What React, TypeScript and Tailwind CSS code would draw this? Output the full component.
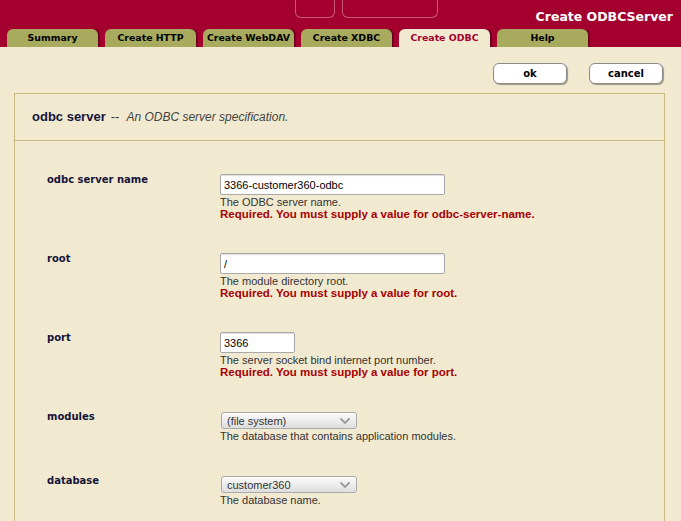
import React from "react";

const tabs = ["Summary", "Create HTTP", "Create WebDAV", "Create XDBC", "Create ODBC", "Help"];

const Chevron = () => (
  <svg width="12" height="8" viewBox="0 0 12 8" className="mr-[5px]">
    <path d="M1.5 1.5 L6 6 L10.5 1.5" fill="none" stroke="#9a9a9a" strokeWidth="1.8" />
  </svg>
);

const Row = ({
  label,
  children,
  help,
  error,
}: {
  label: string;
  children: React.ReactNode;
  help: string;
  error?: string;
}) => (
  <div className="flex pb-[33px]">
    <div className="w-[205px] pl-[32px] font-['DejaVu_Sans',sans-serif] font-bold text-[10px] leading-[12px] text-[#14143c]">
      {label}
    </div>
    <div className="flex flex-col font-['Liberation_Sans',Arial,sans-serif] text-[11px] leading-[12px]">
      {children}
      <div className="mt-[1px] text-[#333]">{help}</div>
      {error && <div className="font-bold text-[11.5px] text-[#a80000]">{error}</div>}
    </div>
  </div>
);

const TextBox = ({ value, width }: { value: string; width: string }) => (
  <div
    className={`${width} h-[21px] bg-white border border-[#a8a8a8] rounded-[2px] pl-[3px] flex items-center font-['Liberation_Sans',Arial,sans-serif] text-[11px] text-black shadow-[inset_0_1px_1px_#ddd]`}
  >
    {value}
  </div>
);

const Select = ({ value }: { value: string }) => (
  <div className="w-[136px] h-[17px] ml-[1px] mt-[1px] border border-[#aaa] rounded-[3px] bg-gradient-to-b from-[#fbfbfb] to-[#dedede] flex items-center justify-between pl-[5px] text-[11px] text-[#333]">
    <span>{value}</span>
    <Chevron />
  </div>
);

export default function App() {
  return (
    <div className="min-h-[560px] bg-[#f2ead0]">
      <div className="bg-[#a3002f] h-[47px] flex flex-col">
        <div className="h-[29px] flex items-start">
          <div className="ml-[295px] flex gap-[7px]">
            <div className="w-[40px] h-[18px] border border-t-0 border-[#c85a78] rounded-b-[6px]" />
            <div className="w-[96px] h-[18px] border border-t-0 border-[#c85a78] rounded-b-[6px]" />
          </div>
          <div className="ml-auto mr-[8px] mt-[9px] font-['DejaVu_Sans',sans-serif] font-bold text-[12.5px] leading-[16px] text-white">
            Create ODBCServer
          </div>
        </div>
        <div className="h-[18px] flex gap-[7px] pl-[7px]">
          {tabs.map((t) => {
            const active = t === "Create ODBC";
            return (
              <div
                key={t}
                className={`w-[91px] h-[18px] rounded-t-[6px] flex items-center justify-center font-['DejaVu_Sans',sans-serif] font-bold text-[9.4px] shadow-[2px_0_0_#6e0022] ${
                  active ? "bg-[#f2ead0] text-[#a3002f]" : "bg-[#a8ab5e] text-black"
                }`}
              >
                {t}
              </div>
            );
          })}
        </div>
      </div>

      <div className="flex justify-end gap-[22px] pr-[18px] pt-[16px] pb-[9px]">
        {["ok", "cancel"].map((b) => (
          <div
            key={b}
            className="w-[74px] h-[21px] bg-white border border-[#8a8a8a] rounded-[6px] shadow-[1px_1px_1px_#9a9680] flex items-center justify-center font-['DejaVu_Sans',sans-serif] font-bold text-[10px] text-black"
          >
            {b}
          </div>
        ))}
      </div>

      <div className="ml-[14px] w-[651px] border border-[#c9b97f]">
        <div className="h-[47px] border-b border-[#c9b97f] flex items-center pl-[17px] font-['Liberation_Sans',Arial,sans-serif] text-[13px] leading-[16px]">
          <span className="font-bold text-[#14143c]">odbc server</span>
          <span className="ml-[5px] text-[#333]">--</span>
          <span className="ml-[7px] italic text-[12px] text-[#444]">An ODBC server specification.</span>
        </div>
        <div className="pt-[33px]">
          <Row
            label="odbc server name"
            help="The ODBC server name."
            error="Required. You must supply a value for odbc-server-name."
          >
            <TextBox value="3366-customer360-odbc" width="w-[225px]" />
          </Row>
          <Row label="root" help="The module directory root." error="Required. You must supply a value for root.">
            <TextBox value="/" width="w-[225px]" />
          </Row>
          <Row
            label="port"
            help="The server socket bind internet port number."
            error="Required. You must supply a value for port."
          >
            <TextBox value="3366" width="w-[75px]" />
          </Row>
          <Row label="modules" help="The database that contains application modules.">
            <Select value="(file system)" />
          </Row>
          <Row label="database" help="The database name.">
            <Select value="customer360" />
          </Row>
        </div>
      </div>
    </div>
  );
}
